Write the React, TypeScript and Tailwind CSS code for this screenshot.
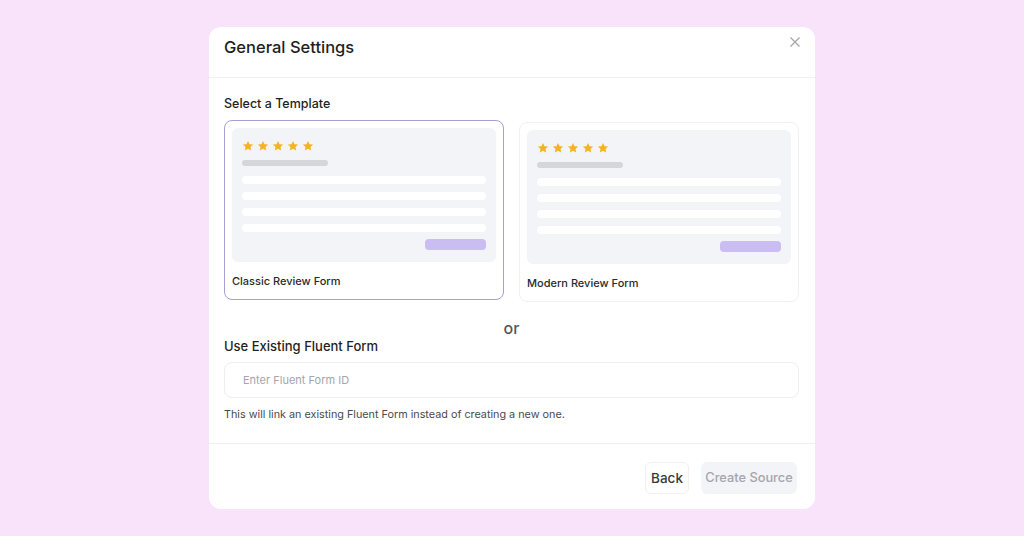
import React from "react";

function Stars() {
  return (
    <div className="flex gap-[3px]">
      {[0, 1, 2, 3, 4].map((i) => (
        <svg key={i} width="12" height="12" viewBox="0 0 24 24" className="fill-[#f5b323]">
          <path d="M12 1.8l3.1 6.5 7.1.9-5.2 4.9 1.4 7.1L12 17.7l-6.4 3.5L7 14.1 1.8 9.2l7.1-.9z" />
        </svg>
      ))}
    </div>
  );
}

function Preview() {
  return (
    <div className="h-[134px] rounded-md bg-[#f3f4f8] px-[10px] pt-[12px]">
      <Stars />
      <div className="mt-[8px] h-[6px] w-[86px] rounded-full bg-[#d5d6da]" />
      <div className="mt-[10px] flex flex-col gap-[8px]">
        <div className="h-[8px] rounded-sm bg-white" />
        <div className="h-[8px] rounded-sm bg-white" />
        <div className="h-[8px] rounded-sm bg-white" />
        <div className="h-[8px] rounded-sm bg-white" />
      </div>
      <div className="mt-[7px] flex justify-end">
        <div className="h-[11px] w-[61px] rounded bg-[#c9bdf2]" />
      </div>
    </div>
  );
}

function TemplateCard({ label, active }: { label: string; active?: boolean }) {
  return (
    <div
      className={
        active
          ? "h-[180px] rounded-lg border border-[#a99ed8] bg-white p-[7px]"
          : "mt-[2px] h-[180px] rounded-lg border border-[#f1f1f4] bg-white p-[7px]"
      }
    >
      <Preview />
      <div className="mt-[11px] text-[11px] leading-[16px] font-medium text-[#2a2a2e]">{label}</div>
    </div>
  );
}

export default function App() {
  return (
    <div
      className="flex h-[536px] w-[1024px] items-start justify-center bg-[#f8e3fb] pt-[27px]"
      style={{ fontFamily: "Inter, 'Noto Sans', sans-serif" }}
    >
      <div className="h-[482px] w-[606px] rounded-xl bg-white">
        <div className="relative h-[51px] border-b border-[#f0f0f3] px-[15px] pt-[9px]">
          <h2 className="text-[16.5px] leading-[22px] font-medium text-[#1f1f23]">General Settings</h2>
          <button className="absolute right-[14px] top-[9px] text-[#a3a3a8]">
            <svg width="12" height="12" viewBox="0 0 12 12" fill="none" stroke="currentColor" strokeWidth="1.2">
              <path d="M1.5 1.5l9 9M10.5 1.5l-9 9" />
            </svg>
          </button>
        </div>

        <div className="pl-[15px] pr-[16px] pt-[17px]">
          <div className="text-[12.5px] leading-[18px] font-medium text-[#1f1f23]">Select a Template</div>
          <div className="mt-[7px] grid grid-cols-2 gap-[15px]">
            <TemplateCard label="Classic Review Form" active />
            <TemplateCard label="Modern Review Form" />
          </div>

          <div className="mt-[18px] text-center text-[16px] font-medium leading-[16px] text-[#555559]">or</div>

          <div className="mt-[1px] text-[13px] leading-[18px] font-medium text-[#1f1f23]">Use Existing Fluent Form</div>
          <div className="mt-[7px] flex h-[36px] items-center rounded-lg border border-[#eeeef1] px-[18px] text-[11px] text-[#a5a5aa]">
            Enter Fluent Form ID
          </div>
          <div className="mt-[9px] text-[10.8px] leading-[16px] text-[#4a4a4f]">
            This will link an existing Fluent Form instead of creating a new one.
          </div>
        </div>

        <div className="mt-[20px] flex justify-end gap-[12px] border-t border-[#f0f0f3] px-[18px] pt-[18px]">
          <button className="h-[32px] w-[44px] rounded-md border border-[#f1f1f4] bg-white text-[13.5px] font-medium text-[#3a3a3f]">
            Back
          </button>
          <button className="h-[32px] w-[96px] rounded-md bg-[#f3f4f8] text-[12.8px] font-medium text-[#a5a5ab]">
            Create Source
          </button>
        </div>
      </div>
    </div>
  );
}
